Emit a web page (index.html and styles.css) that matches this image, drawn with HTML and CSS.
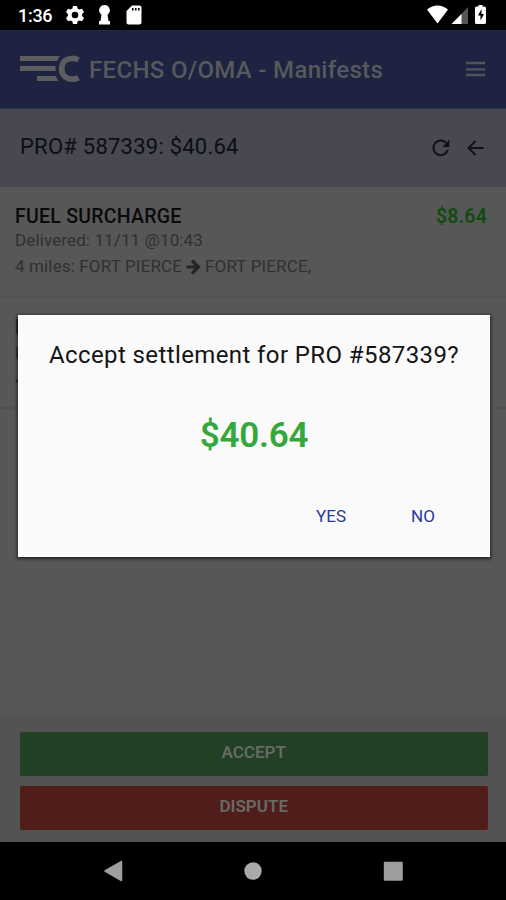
FILE: index.html
```html
<!DOCTYPE html>
<html lang="en">
<head>
<meta charset="utf-8">
<title>FECHS O/OMA - Manifests</title>
<link rel="stylesheet" href="styles.css">
</head>
<body>
<div class="screen">
  <div class="status">
    <span class="clock">1:36</span>
    <svg class="status-left" width="78" height="22" viewBox="0 0 78 22" fill="#fff">
      <g transform="translate(9 11)">
        <path fill-rule="evenodd" d="M-2-9h4l.6 2.5 1.8 1L7-6.3l2 3.4L7.100-1v2L9 2.900l-2 3.400-2.600-.800-1.800 1L2 9h-4l-.6-2.500-1.800-1L-7 6.300l-2-3.400L-7.100 1v-2L-9-2.900l2-3.400 2.600.8 1.800-1zM0-3.300a3.300 3.300 0 1 0 0 6.600a3.300 3.300 0 0 0 0-6.600z"/>
      </g>
      <path d="M38.500 1a5.300 5.300 0 0 1 3.600 9.200l-.6.400 1 6.400h1.500v3.500H33V17h1.500l1-6.400-.6-.4A5.300 5.300 0 0 1 38.500 1z"/>
      <path fill-rule="evenodd" d="M66 1.500h7.500q2 0 2 2V18.500q0 2-2 2H62.500q-2 0-2-2V7zM66 4v2.500h1.600V4zM69 4v2.500h1.600V4zM72 4v2.500h1.600V4z"/>
    </svg>
    <svg class="status-right" width="62" height="22" viewBox="0 0 62 22">
      <path fill="#fff" d="M0 5.500Q10.500-2.500 21 5.500L10.500 19.500z"/>
      <path fill="#555" d="M41 3v17H25z"/>
      <path fill="#fff" d="M34.500 10v10H24.500z"/>
      <path fill="#fff" d="M49.500 2.500h2V1h4v1.500h2q1.500 0 1.500 1.500v14.500q0 1.500-1.500 1.500h-8q-1.500 0-1.500-1.500V4q0-1.500 1.500-1.500z"/>
      <path fill="#000" d="M54.500 5l-3.500 6.500h2.500v5l3.500-6.500h-2.500z"/>
    </svg>
  </div>
  <header class="appbar">
    <svg class="logo" width="60" height="28" viewBox="0 0 60 28">
      <path fill="#5b5d5f" d="M0 1h40l-3 5H0zM0 11h35.500v5H0zM17 21h18.500l3 5H17z"/>
      <path d="M58.500 5Q55 3.200 51.500 3.500C44.500 4 41.700 8.500 41.700 13.800s2.800 9.800 9.800 10.300q3.500.3 7-1.500" fill="none" stroke="#5b5d5f" stroke-width="5.700"/>
    </svg>
    <h1 class="title">FECHS O/OMA - Manifests</h1>
    <svg class="menu" width="20" height="16" viewBox="0 0 20 16"><path d="M0 2h19M0 8.300h19M0 14h19" stroke="#515558" stroke-width="2.300"/></svg>
  </header>
  <section class="subbar">
    <h2 class="pro">PRO# 587339: $40.64</h2>
    <svg class="refresh" width="18" height="18" viewBox="0 0 18 18"><path d="M15.700 11.200A7.300 7.300 0 1 1 14 3.700" fill="none" stroke="#101018" stroke-width="2"/><path d="M17.300.8V8h-7z" fill="#101018"/></svg>
    <svg class="back" width="17" height="16" viewBox="0 0 17 16"><path d="M16.500 8H2M8.500 1L1.500 8l7 7" fill="none" stroke="#101018" stroke-width="1.900"/></svg>
  </section>
  <main class="list">
    <article class="item">
      <div class="row"><h3 class="name">FUEL SURCHARGE</h3><span class="price">$8.64</span></div>
      <p class="meta delivered">Delivered: 11/11 @10:43</p>
      <p class="meta route"><span>4 miles: FORT PIERCE</span><svg width="15" height="16" viewBox="0 0 15 16"><path d="M.5 8h12M6 1.500L12.500 8 6 14.500" fill="none" stroke="#252525" stroke-width="3.200"/></svg><span>FORT PIERCE,</span></p>
    </article>
    <article class="item second">
      <h3 class="name">L</h3>
      <p class="meta dark">D</p>
      <p class="meta dark">4</p>
    </article>
  </main>
  <footer class="actions">
    <button class="btn accept">ACCEPT</button>
    <button class="btn dispute">DISPUTE</button>
  </footer>
  <nav class="nav">
    <svg width="20" height="22" viewBox="0 0 20 22"><path d="M18.500 1.500v19L2 11z" fill="#9e9e9e" stroke="#9e9e9e" stroke-width="1.500" stroke-linejoin="round"/></svg>
    <svg width="18" height="18" viewBox="0 0 18 18"><circle cx="9" cy="9" r="8.700" fill="#aaa"/></svg>
    <svg width="20" height="20" viewBox="0 0 20 20"><rect x=".8" y=".8" width="19" height="19" rx="1" fill="#9e9e9e"/></svg>
  </nav>
  <div class="dialog" role="dialog">
    <p class="question">Accept settlement for PRO #587339?</p>
    <p class="amount">$40.64</p>
    <div class="choices"><button class="choice yes">YES</button><button class="choice no">NO</button></div>
  </div>
</div>
</body>
</html>
```
FILE: styles.css
```css
* { box-sizing: border-box; margin: 0; padding: 0; }
body { font-family: Roboto, "Liberation Sans", sans-serif; background: #575757; }
svg { display: block; flex: none; }
button { font-family: inherit; border: 0; background: none; }
h1, h2, h3, p, span { white-space: nowrap; }
.screen { position: relative; width: 506px; height: 900px; display: flex; flex-direction: column; overflow: hidden; background: #575757; }
.status { height: 30px; flex: none; background: #000; color: #fff; display: flex; align-items: center; padding: 0 18px; }
.clock { font-size: 18px; font-weight: 500; width: 48px; line-height: 28px; letter-spacing: -.3px; padding-top: 1px; }
.status-right { margin-left: auto; margin-right: -1px; }
.appbar { height: 78px; flex: none; background: #1e2342; display: flex; align-items: center; padding: 0 20px; }
.title { font-size: 24px; font-weight: 500; color: #57595b; margin-left: 9px; line-height: 30px; letter-spacing: .32px; padding-top: 1px; }
.menu { margin-left: auto; }
.subbar { height: 79px; flex: none; background: #474850; border-top: 1px solid #303252; display: flex; align-items: center; padding: 0 22px 0 20px; }
.pro { font-size: 22px; font-weight: 400; color: #0d0d16; flex: 1; letter-spacing: .24px; line-height: 28px; margin-top: -3px; }
.back { margin-left: 17px; }
.list { flex: 1; }
.item { height: 111px; padding: 18px 19px 0 15px; border-bottom: 2px solid #515151; }
.row { display: flex; justify-content: space-between; }
.name { font-size: 19.500px; font-weight: 500; line-height: 24px; color: #0a0a0a; letter-spacing: .25px; }
.price { font-size: 19.500px; font-weight: 600; line-height: 24px; color: #104b12; letter-spacing: .2px; }
.meta { font-size: 17px; line-height: 23px; color: #303030; letter-spacing: .12px; }
.route { display: flex; align-items: center; gap: 4px; margin-top: 3px; letter-spacing: .14px; }
.dark { color: #181818; line-height: 26px; }
.actions { height: 127px; flex: none; padding: 16.500px 18.500px 0 20px; background: #535353; display: flex; flex-direction: column; gap: 10px; }
.btn { height: 44px; border-radius: 2px; font-size: 17px; font-weight: 600; color: #676b64; padding-bottom: 3px; }
.accept { background: #224024; }
.dispute { background: #511d1a; }
.nav { height: 58px; flex: none; background: #000; display: flex; align-items: center; justify-content: space-between; padding: 0 103px; }
.dialog { position: absolute; left: 18px; top: 315px; width: 472px; height: 242px; background: #fafafa; border: 1px solid #fff; box-shadow: 0 1px 3px 1px #222; text-align: center; }
.question { font-size: 24px; line-height: 30px; color: #141414; margin-top: 24px; letter-spacing: .4px; }
.amount { font-size: 35px; font-weight: 600; line-height: 44px; color: #35a83b; margin-top: 44px; letter-spacing: -.2px; }
.choices { display: flex; justify-content: flex-end; margin-top: 42px; padding-right: 26px; }
.choice { font-size: 17px; line-height: 32px; color: #2b38a5; width: 80px; }
.no { margin-left: 12px; }
```
